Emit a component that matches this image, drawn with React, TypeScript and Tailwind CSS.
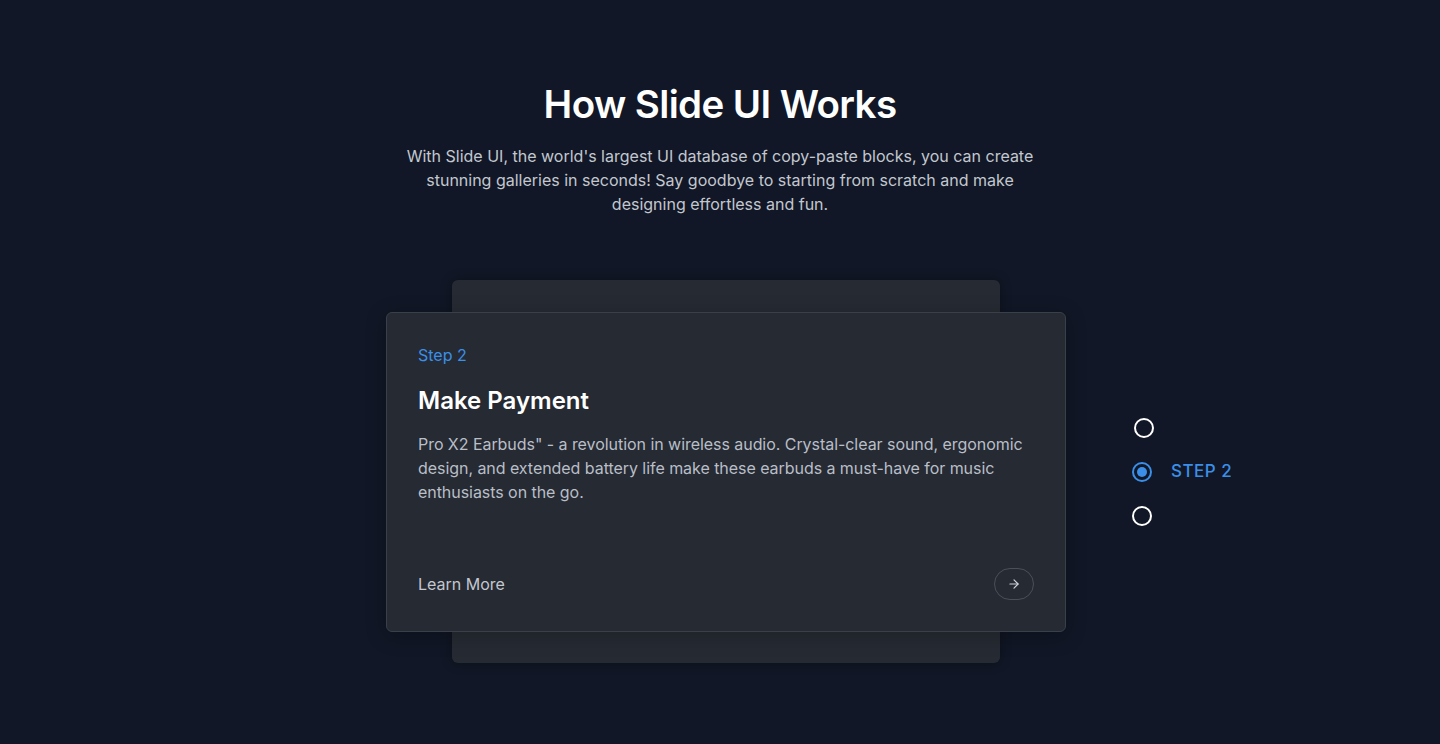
import { ArrowRight } from 'lucide-react';

const steps = [
  { id: 1, label: 'STEP 1' },
  { id: 2, label: 'STEP 2' },
  { id: 3, label: 'STEP 3' },
];

export default function App() {
  const active = 2;

  return (
    <div
      className="min-h-[744px] w-full bg-[#111726] text-white"
      style={{ fontFamily: 'Inter, "Noto Sans", sans-serif' }}
    >
      {/* Header */}
      <div className="flex flex-col items-center pt-[80px] text-center">
        <h1 className="text-[38.5px] font-semibold leading-[49px] tracking-[-0.6px] text-white">How Slide UI Works</h1>
        <p className="mt-[15px] w-[640px] text-base leading-6 text-[#c3c7cf]">
          With Slide UI, the world's largest UI database of copy-paste blocks, you can create stunning galleries in
          seconds! Say goodbye to starting from scratch and make designing effortless and fun.
        </p>
      </div>

      {/* Cards + steps */}
      <div className="mt-[96px] flex items-center pl-[386px]">
        <div className="relative w-[680px]">
          <div className="absolute -top-8 -bottom-[31px] left-[66px] right-[66px] rounded-md bg-[#262b33] shadow-[0_0_12px_rgba(0,0,0,0.3)]" />
          <div className="relative flex h-[320px] flex-col justify-between rounded-md border border-[#3a4049] bg-[#252a33] px-[31px] py-[31px] shadow-[0_4px_20px_rgba(0,0,0,0.25)]">
            <div>
              <div className="pt-px text-base leading-5 text-[#3b8fe8]">Step 2</div>
              <h2 className="mt-[20px] text-[24px] font-semibold leading-8 text-white">Make Payment</h2>
              <p className="mt-[15px] text-base leading-6 tracking-[-0.05px] text-[#b9bec7]">
                Pro X2 Earbuds" - a revolution in wireless audio. Crystal-clear sound, ergonomic design, and extended
                battery life make these earbuds a must-have for music enthusiasts on the go.
              </p>
            </div>
            <div className="flex items-center justify-between">
              <span className="text-base text-[#c3c7cf]">Learn More</span>
              <button className="flex h-8 w-10 items-center justify-center rounded-full border border-[#4a505a] text-[#d0d4da]">
                <ArrowRight size={14} strokeWidth={2} />
              </button>
            </div>
          </div>
        </div>

        <div className="ml-[66px] -mt-px flex flex-col gap-6">
          {steps.map((s) => (
            <div key={s.id} className={`flex h-5 items-center gap-[19px] ${s.id === 1 ? 'ml-0.5' : ''}`}>
              {s.id === active ? (
                <span className="flex h-5 w-5 items-center justify-center rounded-full border-2 border-[#3b8fe8]">
                  <span className="h-2.5 w-2.5 rounded-full bg-[#3b8fe8]" />
                </span>
              ) : (
                <span className="h-5 w-5 rounded-full border-2 border-white" />
              )}
              {s.id === active && (
                <span className="text-[17px] font-medium tracking-[0.5px] text-[#3b8fe8]">{s.label}</span>
              )}
            </div>
          ))}
        </div>
      </div>
    </div>
  );
}
